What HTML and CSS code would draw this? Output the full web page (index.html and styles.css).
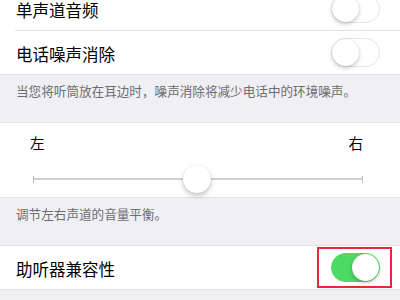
FILE: index.html
```html
<!DOCTYPE html>
<html lang="zh-CN">
<head>
  <meta charset="UTF-8">
  <meta name="viewport" content="width=device-width, initial-scale=1.0">
  <title>听觉设置</title>
  <link rel="stylesheet" href="styles.css">
</head>
<body>
  <div class="screen">
    <div class="group group-top">
      <div class="cell">
        <div class="cell-inner with-line">
          <span class="cell-label">单声道音频</span>
          <span class="switch"><span class="knob"></span></span>
        </div>
      </div>
      <div class="cell">
        <div class="cell-inner">
          <span class="cell-label">电话噪声消除</span>
          <span class="switch"><span class="knob"></span></span>
        </div>
      </div>
    </div>
    <div class="footer">当您将听筒放在耳边时，噪声消除将减少电话中的环境噪声。</div>

    <div class="group balance">
      <div class="balance-labels">
        <span>左</span>
        <span>右</span>
      </div>
      <div class="slider">
        <span class="tick"></span>
        <span class="track"></span>
        <span class="tick"></span>
        <span class="thumb"></span>
      </div>
    </div>
    <div class="footer">调节左右声道的音量平衡。</div>

    <div class="group">
      <div class="cell highlight-cell">
        <div class="cell-inner">
          <span class="cell-label">助听器兼容性</span>
          <span class="switch on"><span class="knob"></span></span>
        </div>
        <span class="highlight"></span>
      </div>
    </div>
    <div class="footer">助听器兼容性可提高部分助听器的音频质量。</div>
  </div>
</body>
</html>
```

FILE: styles.css
```css
body {
  margin: 0;
  background: #efeff4;
  font-family: "Noto Sans CJK SC", "Noto Sans", sans-serif;
  color: #000;
}
.screen {
  width: 400px;
  height: 300px;
  overflow: hidden;
}
.group {
  background: #fff;
  border-top: 1px solid #e3e3e8;
  border-bottom: 1px solid #e3e3e8;
}
.group-top {
  margin-top: -13px;
  border-top: none;
}
.cell {
  position: relative;
  padding-left: 15px;
}
.cell-inner {
  height: 43px;
  display: flex;
  align-items: center;
  justify-content: space-between;
  padding-right: 20px;
}
.cell-inner.with-line {
  border-bottom: 1px solid #e0e0e5;
}
.cell-label {
  font-size: 16.5px;
  padding-left: 1px;
  padding-top: 3px;
}
.switch {
  width: 49px;
  height: 29px;
  box-sizing: border-box;
  border: 1.5px solid #e6e6e9;
  border-radius: 15px;
  background: #fff;
  display: flex;
  align-items: center;
  justify-content: flex-start;
}
.knob {
  width: 27px;
  height: 27px;
  border-radius: 50%;
  background: #fff;
  box-shadow: 0 2px 4px rgba(0, 0, 0, 0.22), 0 0 1px rgba(0, 0, 0, 0.15);
}
.switch.on {
  background: #4cd964;
  border-color: #4cd964;
  justify-content: flex-end;
}
.footer {
  height: 47px;
  box-sizing: border-box;
  padding: 7px 16px 0;
  font-size: 12.6px;
  line-height: 17px;
  color: #6d6d72;
}
.balance {
  height: 76px;
  box-sizing: border-box;
  padding: 10px 37px 0 30px;
}
.balance-labels {
  display: flex;
  justify-content: space-between;
  font-size: 14.5px;
  line-height: 20px;
}
.slider {
  position: relative;
  margin: 12px 0 0 3px;
  display: flex;
  align-items: center;
  height: 28px;
}
.track {
  flex: 1;
  height: 2px;
  background: #cfcfd3;
}
.tick {
  width: 1px;
  height: 7px;
  background: #bdbdc1;
}
.thumb {
  position: absolute;
  left: 150px;
  top: 0;
  width: 28px;
  height: 28px;
  border-radius: 50%;
  background: #fff;
  box-shadow: 0 3px 5px rgba(0, 0, 0, 0.22), 0 0 1px rgba(0, 0, 0, 0.15);
}
.highlight {
  position: absolute;
  right: 8px;
  top: 1px;
  width: 75px;
  height: 41px;
  box-sizing: border-box;
  border: 2px solid #e8283c;
}
```
